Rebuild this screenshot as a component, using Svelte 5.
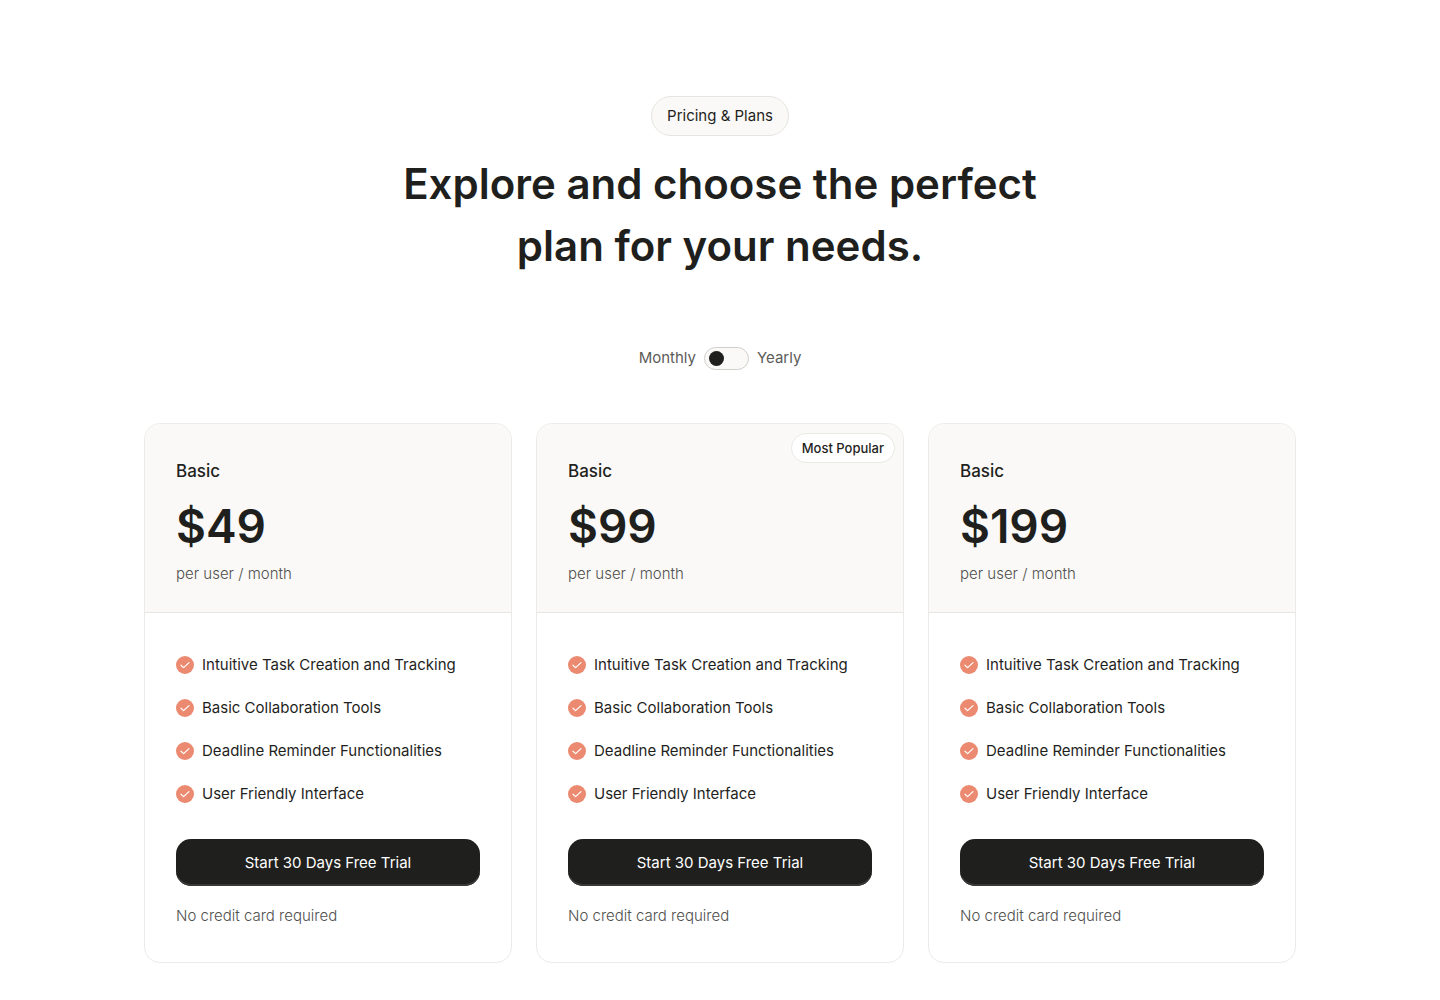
<script>
  let yearly = $state(false);
  const features = [
    'Intuitive Task Creation and Tracking',
    'Basic Collaboration Tools',
    'Deadline Reminder Functionalities',
    'User Friendly Interface'
  ];
  const plans = [
    { name: 'Basic', price: '$49', popular: false },
    { name: 'Basic', price: '$99', popular: true },
    { name: 'Basic', price: '$199', popular: false }
  ];
</script>

<main>
  <header>
    <span class="pill">Pricing &amp; Plans</span>
    <h1>Explore and choose the perfect<br />plan for your needs.</h1>
  </header>

  <label class="billing">
    <span>Monthly</span>
    <input type="checkbox" role="switch" aria-label="Bill yearly" bind:checked={yearly} />
    <span>Yearly</span>
  </label>

  <section class="plans">
    {#each plans as plan}
      <article>
        <div class="top">
          {#if plan.popular}<span class="badge">Most Popular</span>{/if}
          <h2>{plan.name}</h2>
          <p class="price">{plan.price}</p>
          <p class="muted">per user / month</p>
        </div>
        <div class="body">
          <ul>
            {#each features as feature}
              <li>
                <svg viewBox="0 0 18 18" width="18" height="18" aria-hidden="true">
                  <circle cx="9" cy="9" r="9" fill="#eb8a70" />
                  <path d="M5 9.2l2.6 2.4 5.4-5" fill="none" stroke="#fff" stroke-width="1.2" stroke-linecap="round" stroke-linejoin="round" />
                </svg>
                <span>{feature}</span>
              </li>
            {/each}
          </ul>
          <button type="button">Start 30 Days Free Trial</button>
          <p class="muted">No credit card required</p>
        </div>
      </article>
    {/each}
  </section>
</main>

<style>
  :global(body) {
    margin: 0;
    background: #fff;
  }
  main {
    box-sizing: border-box;
    max-width: 1200px;
    margin: 0 auto;
    padding: 96px 24px 37px;
    color: #1f1f1d;
    font-family: Inter, 'Liberation Sans', sans-serif;
    font-size: 15px;
    line-height: 24px;
  }
  h1, h2, p, ul {
    margin: 0;
    padding: 0;
  }
  header {
    display: flex;
    flex-direction: column;
    align-items: center;
    gap: 17px;
  }
  .pill {
    padding: 7px 15px;
    border: 1px solid #e4e4e1;
    border-radius: 20px;
    background: #faf9f7;
  }
  h1 {
    font-size: 42px;
    line-height: 62px;
    font-weight: 600;
    text-align: center;
  }
  .billing {
    display: flex;
    justify-content: center;
    align-items: center;
    gap: 8px;
    width: fit-content;
    margin: 69px auto 53px;
    color: #5c5c59;
  }
  input {
    appearance: none;
    display: flex;
    align-items: center;
    box-sizing: border-box;
    width: 45px;
    height: 23px;
    margin: 0;
    padding: 0 4px;
    border: 1px solid #cfcfcc;
    border-radius: 12px;
    background: #faf9f7;
  }
  input::before {
    content: '';
    width: 15px;
    height: 15px;
    border-radius: 50%;
    background: #1f1f1d;
  }
  input:checked {
    justify-content: flex-end;
  }
  .plans {
    display: grid;
    grid-template-columns: repeat(3, 1fr);
    gap: 24px;
  }
  article {
    border: 1px solid #ebebe9;
    border-radius: 16px;
    overflow: hidden;
  }
  .top {
    position: relative;
    padding: 35px 31px 26px;
    border-bottom: 1px solid #e6e6e4;
    background: #faf9f7;
  }
  h2 {
    font-size: 17px;
    line-height: 24px;
    font-weight: 500;
  }
  .price {
    margin: 15px 0 8px;
    font-size: 46px;
    line-height: 56px;
    font-weight: 600;
  }
  .muted {
    color: #50504d;
    font-weight: 300;
  }
  .badge {
    position: absolute;
    top: 9px;
    right: 8px;
    padding: 4px 10px;
    border: 1px solid #e8e8e5;
    border-radius: 15px;
    background: #fff;
    font-size: 13px;
    line-height: 20px;
    font-weight: 500;
  }
  .body {
    padding: 40px 31px 34px;
  }
  ul {
    display: grid;
    gap: 19px;
    list-style: none;
  }
  li {
    display: flex;
    align-items: center;
    gap: 8px;
  }
  svg {
    flex: none;
  }
  button {
    width: 100%;
    height: 47px;
    margin: 33px 0 18px;
    border: 0;
    border-radius: 15px;
    background: #1f1f1d;
    box-shadow: inset 0 -2px #383837;
    color: #fff;
    font: inherit;
    cursor: pointer;
  }
</style>
